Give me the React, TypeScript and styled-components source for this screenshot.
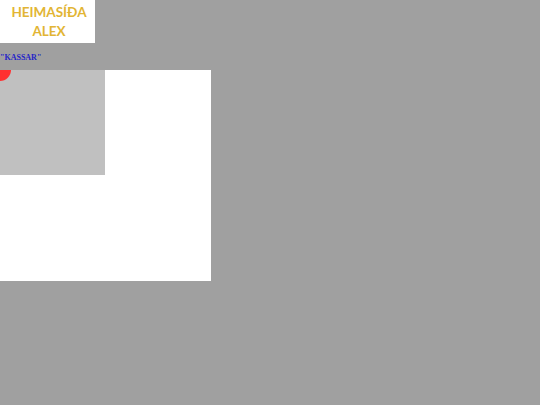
import React from "react";
import styled, { createGlobalStyle } from "styled-components";

const GlobalStyle = createGlobalStyle`
  html, body {
    margin: 0;
    padding: 0;
    background: #a0a0a0;
  }
`;

const Header = styled.div`
  width: 95px;
  height: 43px;
  box-sizing: border-box;
  padding: 1px 0 0 3px;
  background: #ffffff;
  display: flex;
  flex-direction: column;
  align-items: center;
  justify-content: center;
  font-family: Lato, "Open Sans", sans-serif;
  font-weight: 700;
  font-size: 13.5px;
  line-height: 19px;
  color: #e2b534;
`;

const Label = styled.div`
  margin-top: 9px;
  height: 18px;
  font-family: "Liberation Serif", serif;
  font-weight: 700;
  font-size: 8px;
  line-height: 12px;
  color: #2424c8;
`;

const Board = styled.div`
  width: 211px;
  height: 211px;
  background: #ffffff;
`;

const Tile = styled.div`
  position: relative;
  width: 105px;
  height: 105px;
  background: #c0c0c0;
  overflow: hidden;
`;

const Dot = styled.span`
  position: absolute;
  left: -11px;
  top: -11px;
  width: 22px;
  height: 22px;
  border-radius: 50%;
  background: #ff3030;
`;

export default function App() {
  return (
    <>
      <GlobalStyle />
      <Header>
        <span>HEIMASÍÐA</span>
        <span>ALEX</span>
      </Header>
      <Label>"KASSAR"</Label>
      <Board>
        <Tile>
          <Dot />
        </Tile>
      </Board>
    </>
  );
}
